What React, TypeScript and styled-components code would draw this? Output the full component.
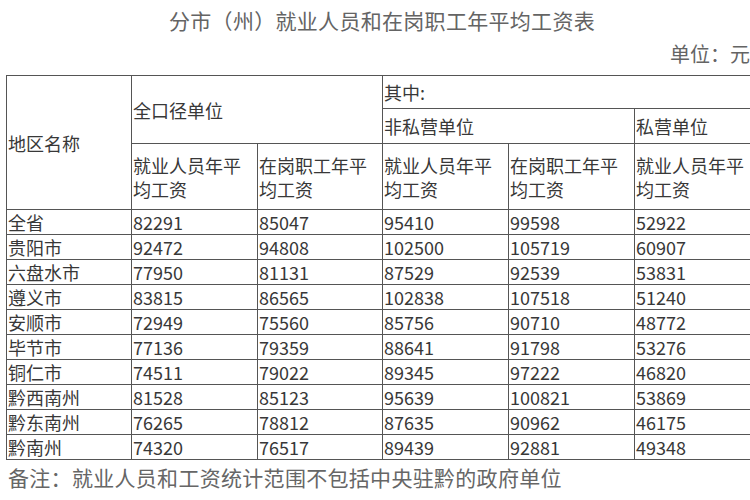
import React from 'react'
import styled, { createGlobalStyle } from 'styled-components'

const GlobalStyle = createGlobalStyle`
  body {
    margin: 0;
    padding: 0;
    background: #fff;
  }
`

const Page = styled.div`
  width: 750px;
  height: 500px;
  padding-left: 6px;
  box-sizing: border-box;
  overflow: hidden;
`

const Heading = styled.div`
  width: 752px;
`

const Title = styled.h1`
  margin: 0;
  padding-top: 7px;
  height: 30px;
  line-height: 30px;
  text-align: center;
  font-family: 'Liberation Serif', 'Noto Sans CJK SC', serif;
  font-weight: normal;
  font-size: 21px;
  color: #646464;
  letter-spacing: 0.3px;
`

const Unit = styled.div`
  margin-top: 3px;
  height: 30px;
  line-height: 30px;
  padding-right: 8px;
  text-align: right;
  font-family: 'Liberation Serif', 'Noto Sans CJK SC', serif;
  font-size: 20px;
  color: #646464;
`

const Table = styled.table`
  margin-top: 5px;
  border-collapse: collapse;
  table-layout: fixed;
  width: 770px;
  font-family: 'Noto Sans CJK SC', 'Liberation Sans', sans-serif;
  font-size: 18px;
  color: #383838;
`

const HeadRow = styled.tr<{ h: number }>`
  height: ${({ h }) => h}px;
`

const DataRow = styled.tr`
  height: 24.8px;
`

const Cell = styled.td`
  border: 1px solid #555;
  padding: 0 2px 0 1px;
  line-height: 24px;
  vertical-align: middle;
  text-align: left;
  white-space: normal;
`

const Note = styled.div`
  margin-top: 4px;
  height: 30px;
  line-height: 30px;
  font-family: 'Liberation Serif', 'Noto Sans CJK SC', serif;
  font-size: 21px;
  color: #666;
  padding-left: 2px;
  letter-spacing: 0.3px;
`

const rows: [string, number, number, number, number, number][] = [
  ['全省', 82291, 85047, 95410, 99598, 52922],
  ['贵阳市', 92472, 94808, 102500, 105719, 60907],
  ['六盘水市', 77950, 81131, 87529, 92539, 53831],
  ['遵义市', 83815, 86565, 102838, 107518, 51240],
  ['安顺市', 72949, 75560, 85756, 90710, 48772],
  ['毕节市', 77136, 79359, 88641, 91798, 53276],
  ['铜仁市', 74511, 79022, 89345, 97222, 46820],
  ['黔西南州', 81528, 85123, 95639, 100821, 53869],
  ['黔东南州', 76265, 78812, 87635, 90962, 46175],
  ['黔南州', 74320, 76517, 89439, 92881, 49348],
]

const widths = [125, 126, 125, 126, 126, 142]

export default function App() {
  return (
    <Page>
      <GlobalStyle />
      <Heading>
        <Title>分市（州）就业人员和在岗职工年平均工资表</Title>
        <Unit>单位：元</Unit>
      </Heading>
      <Table>
        <colgroup>
          {widths.map((w, i) => (
            <col key={i} style={{ width: w }} />
          ))}
        </colgroup>
        <tbody>
          <HeadRow h={33}>
            <Cell rowSpan={3}>地区名称</Cell>
            <Cell rowSpan={2} colSpan={2}>全口径单位</Cell>
            <Cell colSpan={3}>其中:</Cell>
          </HeadRow>
          <HeadRow h={35}>
            <Cell colSpan={2}>非私营单位</Cell>
            <Cell>私营单位</Cell>
          </HeadRow>
          <HeadRow h={66}>
            <Cell>就业人员年平均工资</Cell>
            <Cell>在岗职工年平均工资</Cell>
            <Cell>就业人员年平均工资</Cell>
            <Cell>在岗职工年平均工资</Cell>
            <Cell>就业人员年平<br />均工资</Cell>
          </HeadRow>
          {rows.map((r) => (
            <DataRow key={r[0]}>
              {r.map((v, i) => (
                <Cell key={i}>{v}</Cell>
              ))}
            </DataRow>
          ))}
        </tbody>
      </Table>
      <Note>备注：就业人员和工资统计范围不包括中央驻黔的政府单位</Note>
    </Page>
  )
}
